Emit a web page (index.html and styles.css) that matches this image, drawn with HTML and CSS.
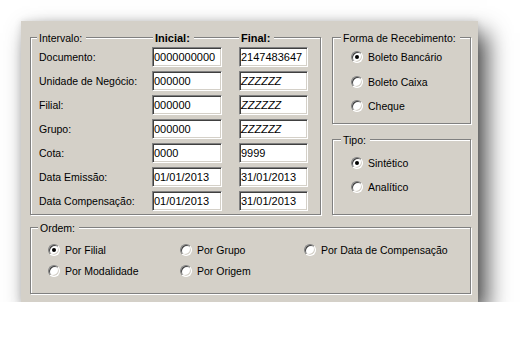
FILE: index.html
```html
<!DOCTYPE html>
<html lang="pt">
<head>
<meta charset="utf-8">
<link rel="stylesheet" href="styles.css">
</head>
<body>
<div class="panel">
  <div class="group intervalo">
    <div class="grid">
      <div class="title t1"><span>Intervalo:</span></div>
      <div class="title t2"><span class="bold">Inicial:</span></div>
      <div class="title t3"><span class="bold">Final:</span></div>

      <div class="lbl">Documento:</div>
      <div class="field">0000000000</div>
      <div class="field f2">2147483647</div>

      <div class="lbl">Unidade de Negócio:</div>
      <div class="field">000000</div>
      <div class="field f2 z">ZZZZZZ</div>

      <div class="lbl">Filial:</div>
      <div class="field">000000</div>
      <div class="field f2 z">ZZZZZZ</div>

      <div class="lbl">Grupo:</div>
      <div class="field">000000</div>
      <div class="field f2 z">ZZZZZZ</div>

      <div class="lbl">Cota:</div>
      <div class="field">0000</div>
      <div class="field f2">9999</div>

      <div class="lbl">Data Emissão:</div>
      <div class="field">01/01/2013</div>
      <div class="field f2">31/01/2013</div>

      <div class="lbl">Data Compensação:</div>
      <div class="field">01/01/2013</div>
      <div class="field f2">31/01/2013</div>
    </div>
  </div>

  <div class="side">
    <div class="group forma">
      <div class="title"><span>Forma de Recebimento:</span></div>
      <div class="list">
        <div class="radio checked"><i></i>Boleto Bancário</div>
        <div class="radio"><i></i>Boleto Caixa</div>
        <div class="radio"><i></i>Cheque</div>
      </div>
    </div>
    <div class="group tipo">
      <div class="title"><span>Tipo:</span></div>
      <div class="list">
        <div class="radio checked"><i></i>Sintético</div>
        <div class="radio"><i></i>Analítico</div>
      </div>
    </div>
  </div>

  <div class="group ordem">
    <div class="title"><span>Ordem:</span></div>
    <div class="ogrid">
      <div class="radio checked"><i></i>Por Filial</div>
      <div class="radio"><i></i>Por Grupo</div>
      <div class="radio"><i></i>Por Data de Compensação</div>
      <div class="radio"><i></i>Por Modalidade</div>
      <div class="radio"><i></i>Por Origem</div>
    </div>
  </div>
</div>
</body>
</html>
```

FILE: styles.css
```css
html, body {
  margin: 0;
  background: #fff;
}
body {
  padding: 21px 0 0 21px;
  font-family: "Liberation Sans", Arial, sans-serif;
  font-size: 10.5px;
  color: #000;
}
.panel {
  box-sizing: border-box;
  width: 457px;
  height: 281px;
  background: #d4d0c8;
  padding: 16px 7px 8px 9px;
  display: grid;
  grid-template-columns: 291px 139px;
  grid-template-rows: 178px 67px;
  column-gap: 11px;
  row-gap: 12px;
  box-shadow: 9px 12px 22px rgba(0,0,0,0.7), 0 0 7px rgba(0,0,0,0.12);
}
.group {
  box-sizing: border-box;
  border: 1px solid #808080;
  box-shadow: inset 1px 1px 0 #fff, 1px 1px 0 #fff;
}
.title {
  height: 13px;
  line-height: 13px;
  margin-top: -6px;
  white-space: nowrap;
}
.title span {
  display: inline-block;
  background: #d4d0c8;
  padding: 0 4px 0 2px;
}
.bold {
  font-weight: bold;
  font-size: 11px;
}

/* Intervalo */
.grid {
  display: grid;
  grid-template-columns: 113px 87px 69px;
  grid-template-rows: 11px repeat(7, 20px);
  row-gap: 4px;
  padding-left: 8px;
  margin-top: -6px;
}
.grid .title { margin-top: 0; }
.t1 span { margin-left: -2px; }
.t2 span { margin-left: 1px; }
.lbl {
  line-height: 20px;
  white-space: nowrap;
}
.field {
  box-sizing: border-box;
  width: 70px;
  height: 20px;
  background: #fff;
  border: 1px solid;
  border-color: #808080 #fff #fff #808080;
  box-shadow: inset 1px 1px 0 #404040, inset -1px -1px 0 #d4d0c8;
  padding-left: 1px;
  line-height: 18px;
  font-size: 11px;
  white-space: nowrap;
}
.field.f2 { width: 69px; }
.field.z { font-style: italic; }

/* Side column */
.side {
  display: flex;
  flex-direction: column;
  gap: 15px;
}
.forma { height: 87px; }
.tipo { height: 76px; }
.side .title { padding-left: 8px; }
.list {
  padding-left: 18px;
}
.forma .list .radio { height: 24.5px; }
.tipo .list { padding-top: 4px; }
.tipo .list .radio { height: 24px; }

.radio {
  display: flex;
  align-items: center;
  gap: 5px;
  white-space: nowrap;
}
.radio i {
  position: relative;
  flex: none;
  box-sizing: border-box;
  width: 12px;
  height: 12px;
  border-radius: 50%;
  border: 1px solid;
  border-color: #808080 #fff #fff #808080;
  background: #fff;
  box-shadow: inset 1px 1px 0 #404040, inset -1px -1px 0 #d4d0c8;
}
.radio.checked i::after {
  content: "";
  position: absolute;
  left: 3px;
  top: 3px;
  width: 4px;
  height: 4px;
  border-radius: 50%;
  background: #000;
}

/* Ordem */
.ordem {
  grid-column: 1 / 3;
}
.ordem .title { padding-left: 7px; }
.ogrid {
  display: grid;
  grid-template-columns: 132px 124px auto;
  grid-template-rows: 21px 21px;
  padding: 4px 0 0 17px;
}
.ogrid .radio:nth-child(4) { grid-column: 1; }
```
